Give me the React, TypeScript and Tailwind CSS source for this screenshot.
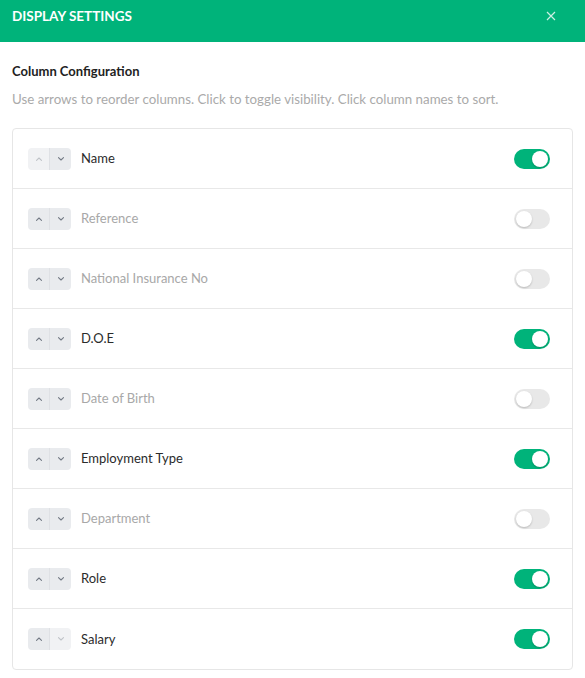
import React from "react";

type Col = { name: string; on: boolean };

const cols: Col[] = [
  { name: "Name", on: true },
  { name: "Reference", on: false },
  { name: "National Insurance No", on: false },
  { name: "D.O.E", on: true },
  { name: "Date of Birth", on: false },
  { name: "Employment Type", on: true },
  { name: "Department", on: false },
  { name: "Role", on: true },
  { name: "Salary", on: true },
];

function Chevron({ up, disabled }: { up: boolean; disabled: boolean }) {
  return (
    <svg width="8" height="8" viewBox="0 0 8 8" fill="none">
      <path
        d={up ? "M1.5 5.3 L4 3 L6.5 5.3" : "M1.5 2.7 L4 5 L6.5 2.7"}
        stroke={disabled ? "#bfc3c8" : "#737a85"}
        strokeWidth="1.1"
        strokeLinecap="round"
        strokeLinejoin="round"
      />
    </svg>
  );
}

function Row({ col, idx, last }: { col: Col; idx: number; last: boolean }) {
  const upDis = idx === 0;
  const downDis = last;
  return (
    <div
      className={`flex items-center h-[60px] pl-[15px] pr-[22px] ${
        last ? "" : "border-b border-[#e8e8e8]"
      }`}
    >
      <div className="flex h-[22px] w-[43px] rounded-[4px] overflow-hidden">
        <div
          className={`flex-1 flex items-center justify-center border-r border-[#dfe1e5] ${
            upDis ? "bg-[#f1f2f4]" : "bg-[#e9ebee]"
          }`}
        >
          <Chevron up disabled={upDis} />
        </div>
        <div
          className={`flex-1 flex items-center justify-center ${
            downDis ? "bg-[#f1f2f4]" : "bg-[#e9ebee]"
          }`}
        >
          <Chevron up={false} disabled={downDis} />
        </div>
      </div>
      <div
        className={`ml-[10px] flex-1 text-[13px] ${
          col.on ? "text-[#2b2b2b]" : "text-[#a8a8a8]"
        }`}
      >
        {col.name}
      </div>
      <div
        className={`relative w-[36px] h-[20px] rounded-full ${
          col.on ? "bg-[#00b37a]" : "bg-[#e8e8e8]"
        }`}
      >
        <div
          className={`absolute top-[2px] w-[16px] h-[16px] rounded-full bg-white shadow-[0_1px_2px_rgba(0,0,0,0.2)] ${
            col.on ? "left-[18px]" : "left-[2px]"
          }`}
        />
      </div>
    </div>
  );
}

export default function App() {
  return (
    <div
      className="w-[585px] h-[678px] bg-white overflow-hidden"
      style={{ fontFamily: "Lato, 'Noto Sans', sans-serif" }}
    >
      <div className="h-[42px] bg-[#00b37a] flex items-start justify-between pl-[12px] pr-[29px] pt-[7px]">
        <div className="text-white font-bold text-[13.5px] leading-[18px]">
          DISPLAY SETTINGS
        </div>
        <svg width="10" height="10" viewBox="0 0 10 10" className="mt-[4px]">
          <path
            d="M1 1 L9 9 M9 1 L1 9"
            stroke="rgba(255,255,255,0.8)"
            strokeWidth="1.2"
          />
        </svg>
      </div>
      <div className="px-[12px]">
        <div className="mt-[20px] text-[13px] font-bold text-[#222]">
          Column Configuration
        </div>
        <div className="mt-[8px] text-[13.3px] text-[#aaaaaa]">
          Use arrows to reorder columns. Click to toggle visibility. Click column names to sort.
        </div>
        <div className="mt-[19px] border border-[#e6e6e6] rounded-[4px] w-[561px]">
          {cols.map((c, i) => (
            <Row key={c.name} col={c} idx={i} last={i === cols.length - 1} />
          ))}
        </div>
      </div>
    </div>
  );
}
